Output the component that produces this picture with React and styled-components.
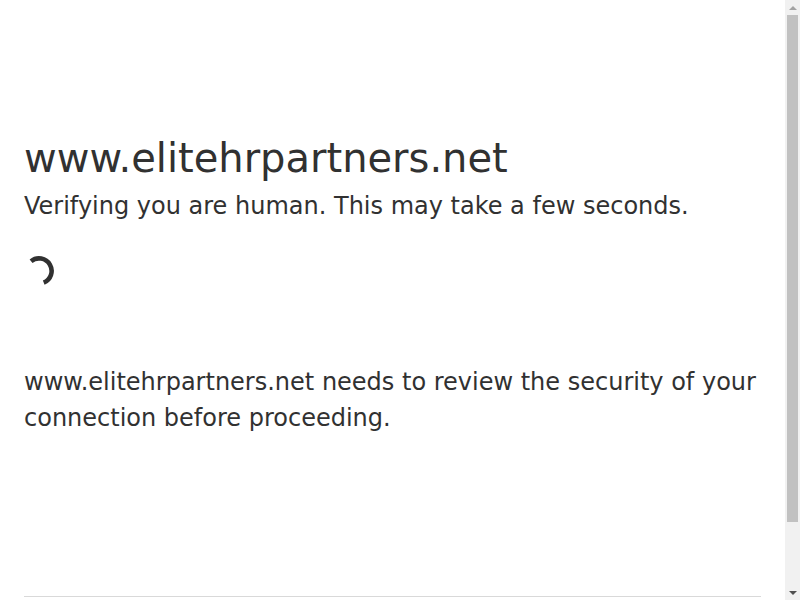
import React from "react";
import styled, { createGlobalStyle } from "styled-components";

const Global = createGlobalStyle`
  html, body {
    margin: 0;
    padding: 0;
    overflow: hidden;
  }
  body {
    color: #313131;
    background: #ffffff;
    font-family: "DejaVu Sans", "Noto Sans", sans-serif;
  }
  * { box-sizing: border-box; }
`;

const Frame = styled.div`
  display: flex;
  height: 100vh;
  overflow: hidden;
`;

const Viewport = styled.div`
  flex: 1;
  min-width: 0;
  overflow: hidden;
`;

const Wrapper = styled.div`
  display: flex;
  flex-direction: column;
  align-items: center;
`;

const Main = styled.main`
  display: flex;
  flex-direction: column;
  margin: 128px auto;
  max-width: 960px;
  width: 100%;
  padding: 0 24px;
`;

const Title = styled.h1`
  margin: 0;
  font-size: 40px;
  font-weight: 500;
  line-height: 60px;
`;

const Subtitle = styled.h2`
  margin: 0;
  font-size: 24px;
  font-weight: 500;
  line-height: 36px;
`;

const SpinnerBox = styled.div`
  margin-top: 32px;
  width: 30px;
  height: 30px;
`;

const CoreMsg = styled.p`
  margin: 78px 0 32px;
  font-size: 24px;
  font-weight: 400;
  line-height: 36px;
`;

const Footer = styled.footer`
  max-width: 960px;
  width: 100%;
  margin: 0 auto;
  padding: 0 24px;
`;

const FooterInner = styled.div`
  border-top: 1px solid #d9d9d9;
  height: 60px;
`;

const ScrollBar = styled.div`
  width: 15px;
  flex: none;
  display: flex;
  flex-direction: column;
  background: #f1f1f1;
`;

const ArrowButton = styled.div`
  height: 15px;
  min-height: 15px;
  flex: none;
  display: flex;
  align-items: center;
  justify-content: center;
`;

const Triangle = styled.span`
  display: block;
  width: 0;
  height: 0;
  border-left: 4px solid transparent;
  border-right: 4px solid transparent;
  ${(p) =>
    p.$dir === "up"
      ? `border-bottom: 4px solid ${p.$color};`
      : `border-top: 4px solid ${p.$color};`}
`;

const Track = styled.div`
  flex: 1;
  min-height: 0;
  padding: 0 2px;
`;

const Thumb = styled.div`
  height: 507px;
  background: #c1c1c1;
`;

function Spinner() {
  return (
    <SpinnerBox>
      <svg width="30" height="30" viewBox="0 0 30 30">
        <path
          d="M7.07 5.21 A12.6 12.6 0 1 1 19.72 26.68"
          fill="none"
          stroke="#313131"
          strokeWidth="4.6"
        />
      </svg>
    </SpinnerBox>
  );
}

export default function App() {
  return (
    <>
      <Global />
      <Frame>
        <Viewport>
          <Wrapper>
            <Main>
              <Title>www.elitehrpartners.net</Title>
              <Subtitle>Verifying you are human. This may take a few seconds.</Subtitle>
              <Spinner />
              <CoreMsg>
                www.elitehrpartners.net needs to review the security of your
                connection before proceeding.
              </CoreMsg>
            </Main>
            <Footer>
              <FooterInner />
            </Footer>
          </Wrapper>
        </Viewport>
        <ScrollBar>
          <ArrowButton>
            <Triangle $dir="up" $color="#a3a3a3" />
          </ArrowButton>
          <Track>
            <Thumb />
          </Track>
          <ArrowButton>
            <Triangle $dir="down" $color="#505050" />
          </ArrowButton>
        </ScrollBar>
      </Frame>
    </>
  );
}
